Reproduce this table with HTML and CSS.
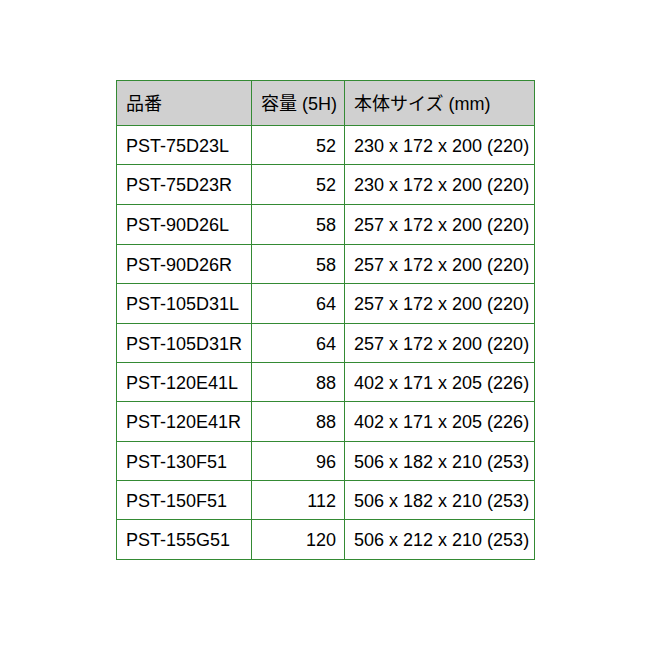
FILE: index.html
```html
<!DOCTYPE html>
<html lang="ja">
<head>
<meta charset="utf-8">
<title>バッテリー仕様</title>
<link rel="stylesheet" href="styles.css">
</head>
<body>
<div class="page">
<table class="spec">
<colgroup><col class="c1"><col class="c2"><col class="c3"></colgroup>
<thead>
<tr class="head"><th>品番</th><th>容量 (5H)</th><th>本体サイズ (mm)</th></tr>
</thead>
<tbody>
<tr class="h38"><td>PST-75D23L</td><td class="num">52</td><td>230 x 172 x 200 (220)</td></tr>
<tr class="h39"><td>PST-75D23R</td><td class="num">52</td><td>230 x 172 x 200 (220)</td></tr>
<tr class="h39"><td>PST-90D26L</td><td class="num">58</td><td>257 x 172 x 200 (220)</td></tr>
<tr class="h38"><td>PST-90D26R</td><td class="num">58</td><td>257 x 172 x 200 (220)</td></tr>
<tr class="h39"><td>PST-105D31L</td><td class="num">64</td><td>257 x 172 x 200 (220)</td></tr>
<tr class="h38"><td>PST-105D31R</td><td class="num">64</td><td>257 x 172 x 200 (220)</td></tr>
<tr class="h38"><td>PST-120E41L</td><td class="num">88</td><td>402 x 171 x 205 (226)</td></tr>
<tr class="h39"><td>PST-120E41R</td><td class="num">88</td><td>402 x 171 x 205 (226)</td></tr>
<tr class="h38"><td>PST-130F51</td><td class="num">96</td><td>506 x 182 x 210 (253)</td></tr>
<tr class="h38"><td>PST-150F51</td><td class="num">112</td><td>506 x 182 x 210 (253)</td></tr>
<tr class="h39"><td>PST-155G51</td><td class="num">120</td><td>506 x 212 x 210 (253)</td></tr>
</tbody>
</table>
</div>
</body>
</html>
```

FILE: styles.css
```css
html, body {
  margin: 0;
  padding: 0;
  background: #ffffff;
}

.page {
  padding: 80px 0 0 116px;
}

.spec {
  border-collapse: separate;
  border-spacing: 1px;
  background: #348a34;
  table-layout: fixed;
  width: 419px;
  font-family: "Liberation Sans", Arial, "Noto Sans CJK JP", sans-serif;
  font-size: 18px;
  color: #000;
}

.c1 { width: 134px; }
.c2 { width: 92px; }
.c3 { width: 189px; }

.spec th,
.spec td {
  box-sizing: border-box;
  padding: 1px 8px 0 9px;
  text-align: left;
  vertical-align: middle;
  font-weight: normal;
  white-space: nowrap;
  background: #ffffff;
  line-height: 20px;
}

.spec th {
  background: #d0d0d0;
  height: 44px;
}

.h38 td { height: 38px; }
.h39 td { height: 39px; }

.spec td.num {
  text-align: right;
}
```
